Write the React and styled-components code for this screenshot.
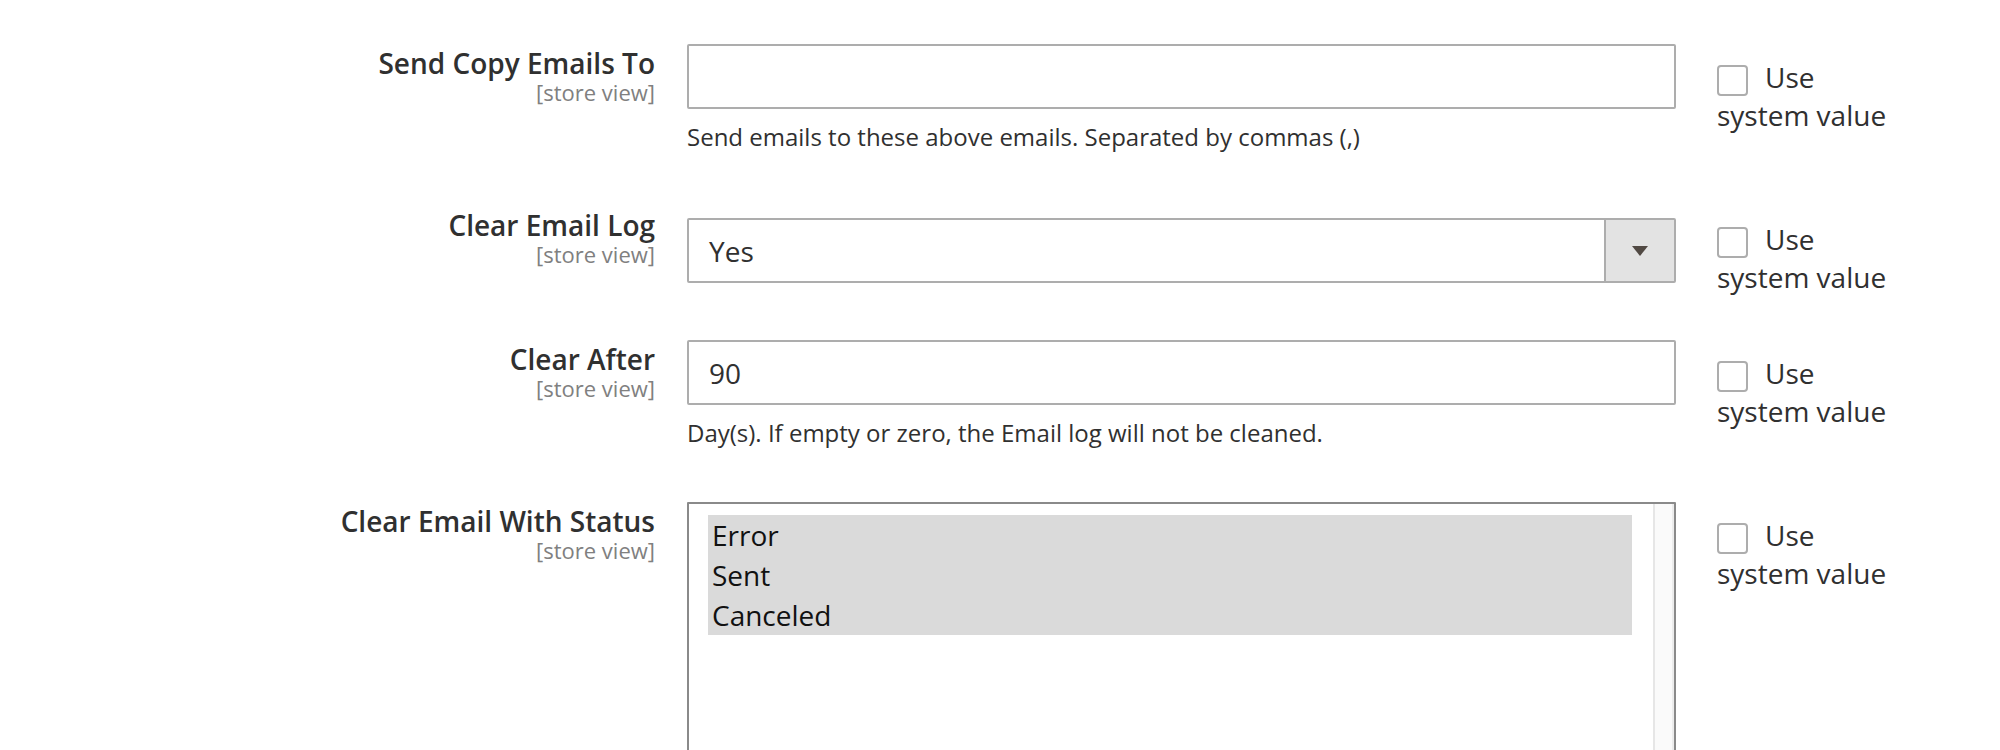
import React from 'react'
import styled, { createGlobalStyle } from 'styled-components'

const GlobalStyle = createGlobalStyle`
  html, body {
    margin: 0;
    padding: 0;
    background: #fff;
  }
  body {
    font-family: 'Open Sans', 'Liberation Sans', sans-serif;
    color: #303030;
  }
  * {
    box-sizing: border-box;
  }
`

const Page = styled.div`
  height: 750px;
  overflow: hidden;
  background: #fff;
`

const Fieldset = styled.div`
  display: flex;
  flex-direction: column;
`

const Row = styled.div`
  display: grid;
  grid-template-columns: 687px 989px 1fr;
  align-items: start;
  margin-top: ${props => props.$top}px;
`

const LabelCell = styled.div`
  padding-right: 32px;
  text-align: right;
`

const LabelTitle = styled.div`
  font-size: 28px;
  line-height: 38px;
  font-weight: 600;
  color: #303030;
`

const Scope = styled.div`
  font-size: 22px;
  line-height: 21px;
  color: #808080;
`

const ValueCell = styled.div`
  display: flex;
  flex-direction: column;
`

const TextInput = styled.input`
  width: 100%;
  height: 65px;
  margin: 0;
  padding: 0 20px;
  border: 2px solid #adadad;
  border-radius: 2px;
  background: #fff;
  font-family: 'Open Sans', 'Liberation Sans', sans-serif;
  font-size: 28px;
  color: #303030;
  outline: none;
`

const Note = styled.div`
  margin-top: 11px;
  font-size: 24px;
  line-height: 33px;
  color: #303030;
`

const Select = styled.div`
  display: flex;
  height: 65px;
  margin-top: 12px;
  border: 2px solid #adadad;
  border-radius: 2px;
  background: #fff;
`

const SelectValue = styled.div`
  flex: 1;
  display: flex;
  align-items: center;
  padding: 0 20px;
  font-size: 28px;
  color: #303030;
`

const SelectButton = styled.div`
  width: 70px;
  display: flex;
  align-items: center;
  justify-content: center;
  background: #e3e3e3;
  border-left: 2px solid #adadad;
`

const Arrow = styled.span`
  width: 0;
  height: 0;
  border-left: 8.5px solid transparent;
  border-right: 8.5px solid transparent;
  border-top: 10px solid #514943;
`

const MultiSelect = styled.div`
  display: flex;
  height: 300px;
  border: 2px solid #8a8a8a;
  border-radius: 1px;
  background: #fff;
`

const OptionList = styled.div`
  flex: 1;
  padding: 11px 21px 0 19px;
`

const Option = styled.div`
  height: 40px;
  line-height: 40px;
  padding: 0 4px;
  font-size: 28px;
  color: #111;
  background: ${props => (props.$selected ? '#dadada' : 'transparent')};
`

const ScrollTrack = styled.div`
  width: 21px;
  background: #fafafa;
  border-left: 2px solid #e6e6e6;
  border-right: 2px solid #ececec;
`

const UseSystem = styled.label`
  display: block;
  width: 180px;
  padding-top: 14px;
  padding-left: 41px;
  box-sizing: content-box;
  font-size: 28px;
  line-height: 38px;
  color: #303030;
`

const Checkbox = styled.span`
  display: inline-block;
  width: 31px;
  height: 31px;
  margin-right: 17px;
  vertical-align: -8px;
  border: 2px solid #adadad;
  border-radius: 4px;
  background: #fff;
`

const Field = ({ label, top, children }) => (
  <Row $top={top}>
    <LabelCell>
      <LabelTitle>{label}</LabelTitle>
      <Scope>[store view]</Scope>
    </LabelCell>
    <ValueCell>{children}</ValueCell>
    <UseSystem>
      <Checkbox />
      Use system value
    </UseSystem>
  </Row>
)

const statuses = ['Error', 'Sent', 'Canceled']

const App = () => (
  <Page>
    <GlobalStyle />
    <Fieldset>
      <Field label="Send Copy Emails To" top={44}>
        <TextInput type="text" defaultValue="" />
        <Note>Send emails to these above emails. Separated by commas (,)</Note>
      </Field>
      <Field label="Clear Email Log" top={53}>
        <Select>
          <SelectValue>Yes</SelectValue>
          <SelectButton>
            <Arrow />
          </SelectButton>
        </Select>
      </Field>
      <Field label="Clear After" top={44}>
        <TextInput type="text" defaultValue="90" />
        <Note>Day(s). If empty or zero, the Email log will not be cleaned.</Note>
      </Field>
      <Field label="Clear Email With Status" top={53}>
        <MultiSelect>
          <OptionList>
            {statuses.map(s => (
              <Option key={s} $selected>
                {s}
              </Option>
            ))}
          </OptionList>
          <ScrollTrack />
        </MultiSelect>
      </Field>
    </Fieldset>
  </Page>
)

export default App
